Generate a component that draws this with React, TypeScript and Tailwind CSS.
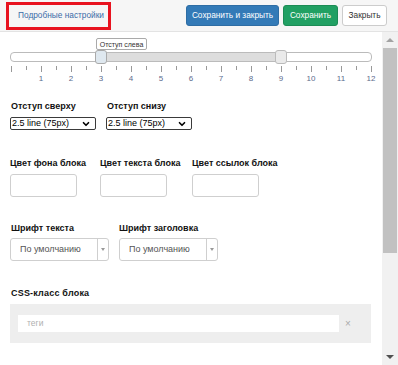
import { ChevronDown } from 'lucide-react';

const font = { fontFamily: '"Liberation Sans", Arial, sans-serif' };

const labelCls = 'h-[12px] whitespace-nowrap text-[9px] font-bold leading-[12px] text-[#111]';

function FakeSelect() {
  return (
    <div className="flex h-[13px] w-[86px] items-center justify-between rounded-[2px] border border-[#3a3a3a] bg-white pl-[1px] pr-[4px] text-[9px] leading-none text-black">
      <span className="whitespace-nowrap">2.5 line (75px)</span>
      <ChevronDown size={10} strokeWidth={4} className="text-black" />
    </div>
  );
}

function FontSelect() {
  return (
    <div className="flex h-[23px] w-[99px] items-center rounded-[3px] border border-[#cfcfcf] bg-white">
      <span className="flex-1 whitespace-nowrap pl-[9px] text-[9px] text-[#555]">По умолчанию</span>
      <div className="flex h-full w-[11px] items-center justify-center border-l border-[#cfcfcf]">
        <div className="h-0 w-0 border-x-[2.5px] border-t-[3px] border-x-transparent border-t-[#999]" />
      </div>
    </div>
  );
}

function ColorField({ label, width }: { label: string; width: string }) {
  return (
    <div className={`flex flex-col ${width}`}>
      <div className={labelCls}>{label}</div>
      <div className="mt-[5px] h-[23px] w-[67px] rounded-[3px] border border-[#cfcfcf] bg-white" />
    </div>
  );
}

function Slider() {
  const ticks = Array.from({ length: 25 }, (_, i) => i);
  const labels = Array.from({ length: 12 }, (_, i) => i + 1);
  return (
    <div className="relative mt-[6px] h-[48px] w-[372px]">
      {/* tooltip */}
      <div className="absolute left-[96px] top-0 flex h-[12px] w-[51px] items-center justify-center whitespace-nowrap rounded-[2px] border border-[#aaa] bg-white text-[7px] leading-none text-[#333]">
        Отступ слева
      </div>
      {/* track */}
      <div className="absolute left-[10px] top-[14px] flex h-[10px] w-[362px] overflow-hidden rounded-[4px] border border-[#bbb] bg-white">
        <div className="w-[91px]" />
        <div className="w-[180px] bg-[#dddddd]" />
      </div>
      {/* handles */}
      <div className="absolute left-[95px] top-[12px] h-[14px] w-[12px] rounded-[3px] border border-[#aaa] bg-[#dfe8ef]" />
      <div className="absolute left-[275px] top-[12px] h-[14px] w-[12px] rounded-[3px] border border-[#bbb] bg-[#eaeaea]" />
      {/* ticks */}
      <div className="absolute left-[11px] top-[28px] flex w-[361px] justify-between">
        {ticks.map((t) => (
          <div key={t} className={`w-px bg-[#999] ${t % 2 === 0 ? 'h-[6px]' : 'h-[4px]'}`} />
        ))}
      </div>
      {/* labels */}
      <div className="absolute left-[26px] top-[36px] flex">
        {labels.map((l) => (
          <div key={l} className="w-[30px] text-center text-[8px] leading-[10px] text-[#5b6b8c]">
            {l}
          </div>
        ))}
      </div>
    </div>
  );
}

export default function App() {
  return (
    <div style={font} className="flex h-[365px] w-[398px] flex-col overflow-hidden bg-white">
      {/* header */}
      <div className="flex h-[32px] shrink-0 items-center border-b border-[#e3e3e3] bg-[#f6f6f6]">
        <div className="ml-[6px] flex h-[28px] w-[105px] items-center border-[3px] border-[#e8131f] pl-[9px]">
          <span className="whitespace-nowrap text-[8.3px] text-[#3a6ca8]">Подробные настройки</span>
        </div>
        <div className="ml-auto mr-[11px] flex items-center gap-[4px]">
          <button className="h-[21px] w-[93px] whitespace-nowrap rounded-[3px] border border-[#2e6da4] bg-[#337ab7] text-[8.3px] text-white">
            Сохранить и закрыть
          </button>
          <button className="h-[21px] w-[55px] whitespace-nowrap rounded-[3px] border border-[#1c8c55] bg-[#21a063] text-[8.3px] text-white">
            Сохранить
          </button>
          <button className="h-[21px] w-[45px] whitespace-nowrap rounded-[3px] border border-[#cccccc] bg-white text-[8.3px] text-[#333]">
            Закрыть
          </button>
        </div>
      </div>

      {/* body */}
      <div className="flex min-h-0 flex-1">
        <div className="flex-1 overflow-hidden">
          <Slider />

          <div className="ml-[10px] mt-[14px] flex gap-[10px]">
            <div className="flex w-[86px] flex-col">
              <div className={`mb-[5px] ml-[1px] ${labelCls}`}>Отступ сверху</div>
              <FakeSelect />
            </div>
            <div className="flex w-[86px] flex-col">
              <div className={`mb-[5px] ml-[1px] ${labelCls}`}>Отступ снизу</div>
              <FakeSelect />
            </div>
          </div>

          <div className="ml-[10px] mt-[27px] flex">
            <ColorField label="Цвет фона блока" width="w-[90px]" />
            <ColorField label="Цвет текста блока" width="w-[92px]" />
            <ColorField label="Цвет ссылок блока" width="w-[90px]" />
          </div>

          <div className="ml-[10px] mt-[25px] flex gap-[10px]">
            <div className="flex flex-col">
              <div className={`mb-[4px] ml-[1px] ${labelCls}`}>Шрифт текста</div>
              <FontSelect />
            </div>
            <div className="flex flex-col">
              <div className={`mb-[4px] ${labelCls}`}>Шрифт заголовка</div>
              <FontSelect />
            </div>
          </div>

          <div className={`ml-[11px] mt-[26px] tracking-[0.2px] ${labelCls}`}>CSS-класс блока</div>
          <div className="ml-[10px] mt-[5px] flex h-[39px] w-[361px] items-center bg-[#eeeeee] pl-[8px]">
            <div className="flex h-[17px] w-[321px] items-center bg-white pl-[9px] text-[8.5px] text-[#b0b0b0]">
              теги
            </div>
            <span className="ml-[6px] text-[10px] leading-none text-[#aaa]">×</span>
          </div>
        </div>

        {/* scrollbar */}
        <div className="flex w-[16px] shrink-0 flex-col items-center bg-[#f1f1f1]">
          <div className="mt-[6px] h-0 w-0 border-x-[4px] border-b-[4px] border-x-transparent border-b-[#a3a3a3]" />
          <div className="mt-[6px] h-[205px] w-[14px] bg-[#c1c1c1]" />
          <div className="mt-auto mb-[6px] h-0 w-0 border-x-[4px] border-t-[4px] border-x-transparent border-t-[#505050]" />
        </div>
      </div>
    </div>
  );
}
